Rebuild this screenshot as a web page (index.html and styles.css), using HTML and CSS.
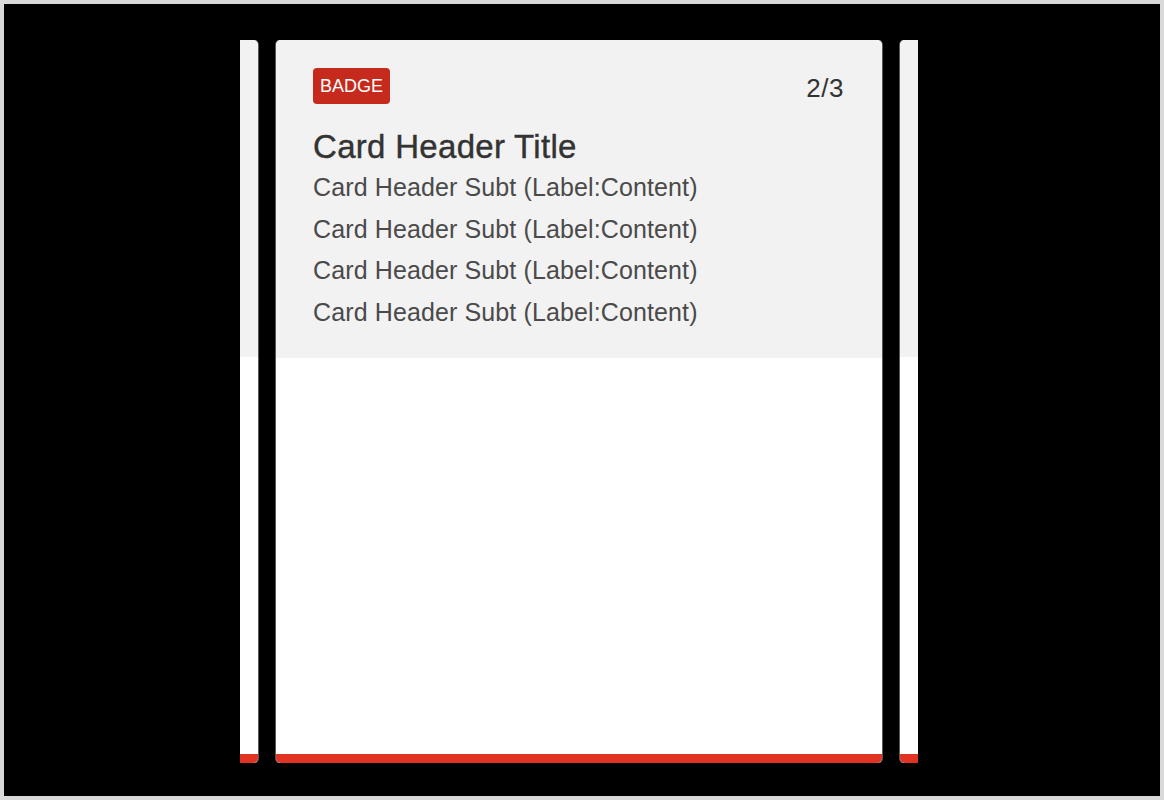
FILE: index.html
```html
<!DOCTYPE html>
<html lang="en">
  <head>
    <meta charset="UTF-8" />
    <meta name="viewport" content="width=device-width, initial-scale=1.0" />
    <title>Card Carousel</title>
    <link rel="stylesheet" href="styles.css">
  </head>
  <body>
    <div class="stage">
      <div class="carousel">
        <div class="track">
          <!-- previous card, only its edge shows -->
          <article class="card">
            <div class="card-header card-header-peek"></div>
            <div class="card-body"></div>
            <div class="card-stripe"></div>
          </article>

          <article class="card">
            <header class="card-header">
              <div class="card-top">
                <span class="badge">BADGE</span>
                <span class="counter">2/3</span>
              </div>
              <h2 class="card-title">Card Header Title</h2>
              <p class="card-subt">Card Header Subt (Label:Content)</p>
              <p class="card-subt">Card Header Subt (Label:Content)</p>
              <p class="card-subt">Card Header Subt (Label:Content)</p>
              <p class="card-subt">Card Header Subt (Label:Content)</p>
            </header>
            <div class="card-body"></div>
            <div class="card-stripe"></div>
          </article>

          <!-- next card, only its edge shows -->
          <article class="card">
            <div class="card-header card-header-peek"></div>
            <div class="card-body"></div>
            <div class="card-stripe"></div>
          </article>
        </div>
      </div>
    </div>
  </body>
</html>
```

FILE: styles.css
```css
/* Reset and Base Styles */
* {
  margin: 0;
  padding: 0;
  box-sizing: border-box;
}

html,
body {
  height: 100%;
}

body {
  font-family: "Liberation Sans", Arial, sans-serif;
  background-color: #d9d9d9;
  padding: 4px;
}

/* Black stage */
.stage {
  height: 100%;
  background-color: #000;
  padding-top: 36px;
  padding-bottom: 33px;
  padding-left: 236px;
}

/* Carousel viewport */
.carousel {
  width: 678px;
  height: 100%;
  overflow: hidden;
}

.track {
  display: flex;
  gap: 18px;
  height: 100%;
  transform: translateX(-588px);
}

/* Card */
.card {
  flex: 0 0 606px;
  display: flex;
  flex-direction: column;
  background-color: #fff;
  border-radius: 5px;
  overflow: hidden;
  box-shadow: 0 0 0 1px rgba(255, 255, 255, 0.35);
}

.card-header {
  background-color: #f2f2f2;
  padding: 27px 38px 25px 37px;
}

.card-header-peek {
  height: 317px;
}

.card-top {
  display: flex;
  justify-content: space-between;
  align-items: center;
}

.badge {
  background-color: #c62a1d;
  color: #fff;
  font-size: 18px;
  line-height: 36px;
  padding: 0 7px;
  border-radius: 4px;
}

.counter {
  color: #333;
  font-size: 26px;
  letter-spacing: 0.5px;
  padding-top: 6px;
}

.card-title {
  color: #333;
  font-size: 33px;
  font-weight: normal;
  line-height: 40px;
  letter-spacing: 0.3px;
  margin-top: 23px;
  -webkit-text-stroke: 0.4px #333;
}

.card-subt {
  color: #4a4a4a;
  font-size: 25px;
  line-height: 41.5px;
  letter-spacing: 0.12px;
}

.card-body {
  flex: 1;
}

.card-stripe {
  height: 9px;
  background-color: #e03321;
}
```
